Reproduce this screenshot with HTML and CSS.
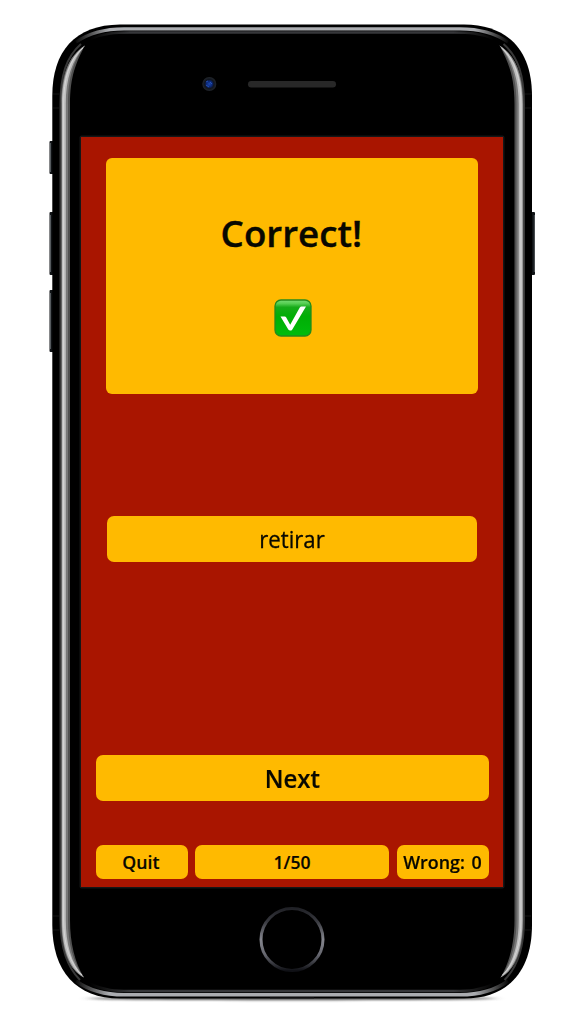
FILE: index.html
```html
<!DOCTYPE html>
<html lang="en">
<head>
<meta charset="utf-8">
<meta name="viewport" content="width=device-width">
<title>Vocabulary quiz</title>
<link rel="stylesheet" href="styles.css">
</head>
<body>
<main class="phone">
  <svg class="phone-frame" viewBox="0 0 584 1024" aria-hidden="true">
    <defs>
      <linearGradient id="fade" gradientUnits="userSpaceOnUse" x1="74" x2="510" y1="0" y2="0">
        <stop offset="0" stop-color="#aaa" stop-opacity="0"/><stop offset=".08" stop-color="#aaacb0"/>
        <stop offset=".92" stop-color="#aaacb0"/><stop offset="1" stop-color="#aaa" stop-opacity="0"/>
      </linearGradient>
      <linearGradient id="dim" gradientUnits="userSpaceOnUse" x1="90" x2="494" y1="0" y2="0">
        <stop offset="0" stop-color="#333" stop-opacity="0"/><stop offset=".1" stop-color="#36373a"/>
        <stop offset=".9" stop-color="#36373a"/><stop offset="1" stop-color="#333" stop-opacity="0"/>
      </linearGradient>
      <linearGradient id="home" x1="0" y1="0" x2="0" y2="1">
        <stop offset="0" stop-color="#202126"/><stop offset=".2" stop-color="#36373d"/><stop offset=".5" stop-color="#85868e"/>
        <stop offset=".75" stop-color="#65666e"/><stop offset="1" stop-color="#101116"/>
      </linearGradient>
      <radialGradient id="lens"><stop offset="0" stop-color="#1b48b0"/><stop offset=".45" stop-color="#0a2369"/><stop offset=".65" stop-color="#10151f"/><stop offset="1" stop-color="#22262c"/></radialGradient>
      <filter id="soft" x="-10%" y="-200%" width="120%" height="500%"><feGaussianBlur stdDeviation="5 .9"/></filter>
      <g id="edge">
        <path d="M81 44C66 57 60.500 76 60.500 104V920C60.500 948 67 967 80 980" fill="none" stroke="#383838" stroke-width="2"/>
        <path d="M85 45.500C68 56 61 76 61 104V920C61 950 69 970 84 977.500C75 963 70 943 70 920V104C70 77 76 62 85 45.500Z" fill="#505050"/>
        <path d="M85 45.500C68 56 61.500 76 61.500 104V920C61.500 950 69 970 84 977.500C73 963 68 943 68 920V104C68 77 74 60 85 45.500Z" fill="#777"/>
        <path d="M85 45.500C69 57 62 78 62 104V920C62 948 69 968 84 977.500C71 964 65.800 943 65.800 920V104C65.800 79 72 60 85 45.500Z" fill="#bdbdbd"/>
        <path d="M83 48C69 59 63.600 80 63.600 104V920C63.600 944 70 964 82 975" fill="none" stroke="#d4d4d4"/>
      </g>
    </defs>
    <ellipse cx="292" cy="998.500" rx="205" ry="1.700" fill="#555" filter="url(#soft)"/>
    <g fill="#101316">
      <rect x="49.500" y="141" width="6" height="33" rx="1"/><rect x="49.500" y="212" width="6" height="63" rx="1"/>
      <rect x="49.500" y="290" width="6" height="62" rx="1"/><rect x="530" y="212" width="5" height="63" rx="1"/>
    </g>
    <path d="M50.500 143V172M50.500 215V272M50.500 293V349M534.300 215V272" stroke="#555a5e"/>
    <path d="M120 24.500H464C509 25 532 51 532 96V925C532 971 508 998.500 464 998.500H120C76 998.500 52.300 971 52.300 925V96C52.300 51 75 25 120 24.500Z"/>
    <path d="M90 39C104 33 116 32.500 130 32.500H454C468 32.500 480 33 494 39" fill="none" stroke="url(#dim)" stroke-width="2.500"/>
    <path d="M76 42C89 33 104 28.800 124 28.800H460C480 28.800 495 33 508 42" fill="none" stroke="url(#fade)" stroke-width="3.200"/>
    <path d="M90 984C104 990.500 116 991 130 991H454C468 991 480 990.500 494 984" fill="none" stroke="url(#dim)" stroke-width="2.500"/>
    <path d="M76 981C89 990.500 104 994.800 124 994.800H460C480 994.800 495 990.500 508 981" fill="none" stroke="url(#fade)" stroke-width="3.600"/>
    <use href="#edge"/><use href="#edge" transform="matrix(-1 0 0 1 584.500 0)"/>
    <path d="M53 94H59M53 108H59M525 94H531M525 108H531M53 916H59M53 930H59M525 916H531M525 930H531" stroke="#151515"/>
    <rect x="79.500" y="135.500" width="425" height="753" rx="2" fill="#151617"/>
    <circle cx="209.300" cy="84" r="7" fill="url(#lens)"/><path d="M206 82L208 81M210 82L212 84M206 85L209 87" stroke="#2450b8" stroke-width="1"/>
    <rect x="248" y="81" width="88" height="6.500" rx="3.250" fill="#282828"/>
    <circle cx="292" cy="939.500" r="31" fill="none" stroke="url(#home)" stroke-width="3"/>
    <path d="M270 998H314" stroke="#1c1c1e"/>
  </svg>
  <section class="screen">
    <div class="result">
      <h1 class="result-title"><span class="label">Correct!</span></h1>
      <svg class="check" viewBox="0 0 38 38" role="img" aria-label="Correct">
        <defs><linearGradient id="green" x1="0" y1="0" x2="0" y2="1"><stop stop-color="#77dc75"/><stop offset=".1" stop-color="#55ce52"/><stop offset=".2" stop-color="#17ab19"/><stop offset=".45" stop-color="#00ae05"/><stop offset="1" stop-color="#00bc0c"/></linearGradient></defs>
        <rect x="1" y="1" width="36" height="36" rx="6" fill="url(#green)" stroke="#248a1c" stroke-width="1.300"/>
        <path d="M6.500 17.500H10.500C11.500 17.500 12 18 12.500 19L16.200 25.700L25.500 9C26.200 7.800 26.800 7.500 28 7.500H32L18.300 30.400C17.300 32 15.100 32 14.300 30.500Z" fill="#fff"/>
      </svg>
    </div>
    <div class="answer"><span class="label">retirar</span></div>
    <button class="btn next"><span class="label">Next</span></button>
    <footer class="status">
      <button class="btn quit"><span class="label">Quit</span></button>
      <div class="btn progress"><span class="label">1/50</span></div>
      <div class="btn wrong"><span class="label">Wrong: 0</span></div>
    </footer>
  </section>
</main>
</body>
</html>
```
FILE: styles.css
```css
* { box-sizing: border-box; }
body { margin: 0; background: #fff; color: #080800; font-family: "Trebuchet MS", "Open Sans", sans-serif; }
.phone { position: relative; width: 584px; height: 1024px; padding: 137px 81px; overflow: hidden; }
.phone-frame { position: absolute; inset: 0; width: 584px; height: 1024px; }
.screen { position: relative; width: 422px; height: 750px; padding: 20.5px 14.5px 0; display: flex; flex-direction: column; background: #a91500; }
.result { height: 236.5px; margin: 0 10.3px; display: flex; flex-direction: column; align-items: center; border-radius: 6px; background: #ffba00; }
.result-title { margin: 51px 0 0; font-size: 36px; line-height: 50px; font-weight: 600; -webkit-text-stroke: .4px #080800; }
.check { width: 38px; height: 38px; margin: 40.3px 0 0 1.5px; flex: none; }
.label { display: inline-block; white-space: nowrap; }
.result-title .label { transform: translateX(-1px) scaleX(1.02); }
.answer { height: 46px; margin: 122px 11.5px 0; display: flex; align-items: center; justify-content: center; border-radius: 7px; background: #ffba00; font-size: 23px; -webkit-text-stroke: .3px #080800; }
.answer .label { transform: scaleX(.965); }
.btn { display: flex; align-items: center; justify-content: center; padding: 0; border: 0; border-radius: 7px; background: #ffba00; color: inherit; font: 600 17.5px "Trebuchet MS", "Open Sans", sans-serif; -webkit-text-stroke: .2px #080800; }
.next { height: 46px; margin-top: 193px; font-size: 25.5px; }
.next .label { transform: scaleX(.94); }
.quit .label { transform: translateX(-.5px) scaleX(1.01); }
.wrong { word-spacing: 2px; }
.wrong .label { transform: scaleX(1.02); }
.status { display: grid; grid-template-columns: 92px 194px 92px; justify-content: space-between; height: 34px; margin-top: 44px; }
```
